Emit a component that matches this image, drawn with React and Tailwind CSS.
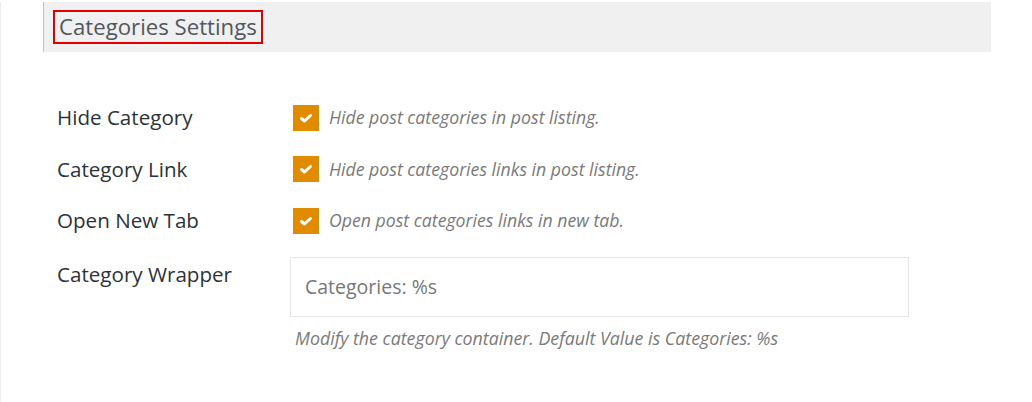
const options = [
  { label: "Hide Category", desc: "Hide post categories in post listing." },
  { label: "Category Link", desc: "Hide post categories links in post listing." },
  { label: "Open New Tab", desc: "Open post categories links in new tab." },
];

const Check = () => (
  <span className="flex h-[26px] w-[26px] items-center justify-center bg-[#e08b00]">
    <svg width="14" height="12" viewBox="0 0 14 12">
      <path d="M2.5 6.5 L5.5 9 L11.5 3.5" fill="none" stroke="#fff" strokeWidth="3" strokeLinecap="round" strokeLinejoin="round" />
    </svg>
  </span>
);

export default function App() {
  return (
    <div
      className="h-[402px] w-[1032px] border-l border-[#ececec] bg-white"
      style={{ fontFamily: '"Open Sans", sans-serif' }}
    >
      <div className="ml-[42px] mt-[2px] flex h-[50px] w-[948px] items-center border-l border-[#e8c25a] bg-[#f0f0f0] pl-[9px]">
        <h2 className="flex h-[34px] items-center border-2 border-[#e00000] px-[4px] text-[22.2px] text-[#50575e]">
          Categories Settings
        </h2>
      </div>

      <div className="ml-[56px] mt-[40px]">
        {options.map((opt) => (
          <div key={opt.label} className="flex h-[51.5px] items-center">
            <div className="w-[236px] text-[20.6px] text-[#2c3338]">{opt.label}</div>
            <div className="flex items-center gap-[10px]">
              <Check />
              <span className="text-[17.7px] italic text-[#7a7a7a]">{opt.desc}</span>
            </div>
          </div>
        ))}

        <div className="mt-[10px] flex items-start">
          <div className="w-[233px] pt-[2px] text-[20.6px] text-[#2c3338]">Category Wrapper</div>
          <div>
            <div className="flex h-[60px] w-[619px] items-center border border-[#e6e6e6] px-[14px] text-[19.5px] text-[#777]">
              Categories: %s
            </div>
            <p className="mt-[8px] pl-[5px] text-[17.8px] italic text-[#7a7a7a]">
              Modify the category container. Default Value is Categories: %s
            </p>
          </div>
        </div>
      </div>
    </div>
  );
}
